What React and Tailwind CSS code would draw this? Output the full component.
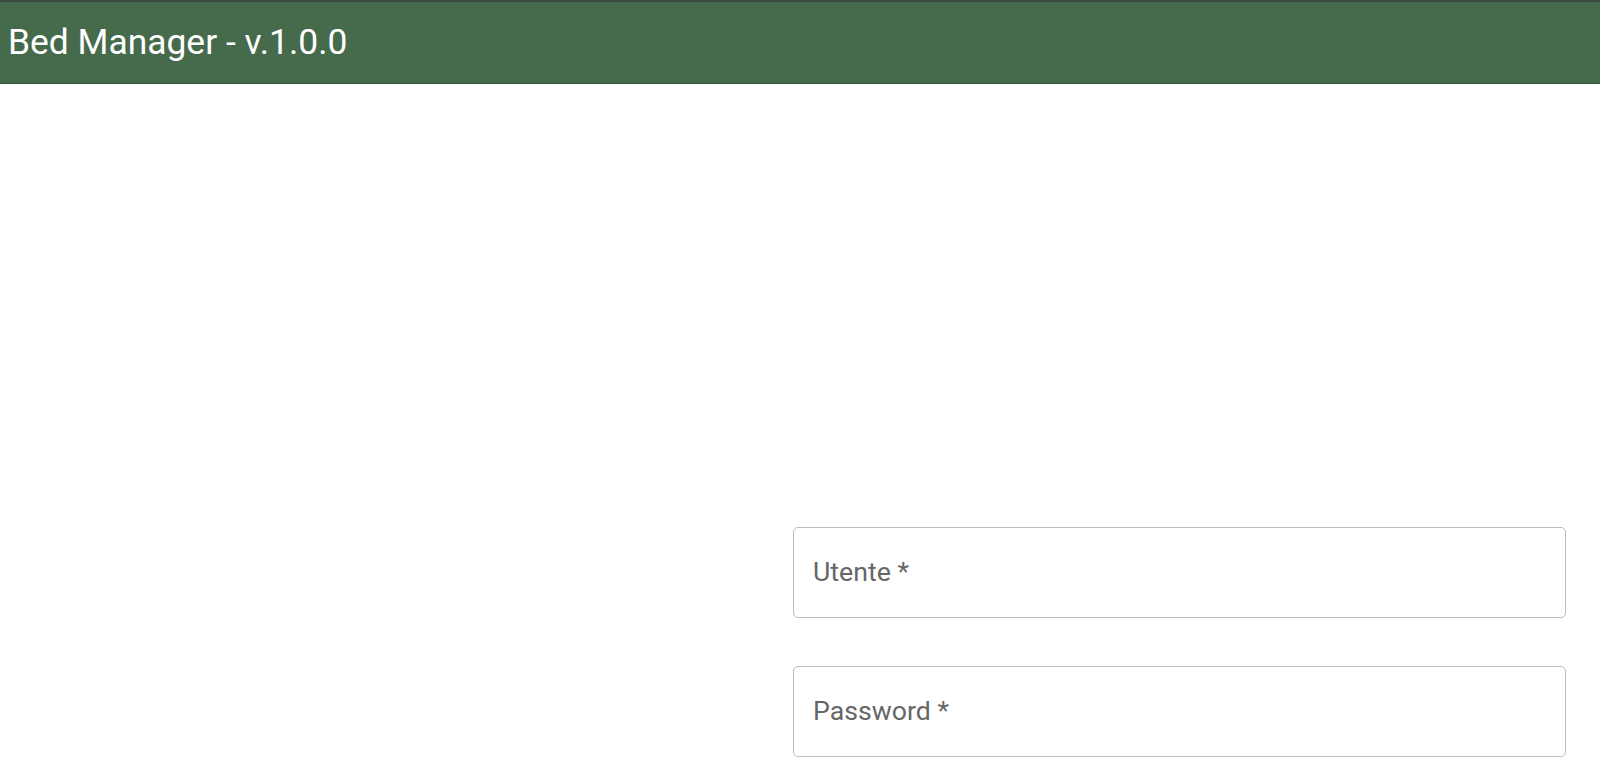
export default function App() {
  return (
    <div className="min-h-[773px] bg-white" style={{ fontFamily: "Roboto, 'Liberation Sans', sans-serif" }}>
      <header className="h-[84px] border-t-2 border-b border-t-[#3d4a40] border-b-[#2f5a36] bg-[#466a4c] flex items-center pl-[8px]">
        <h1 className="text-[35.4px] leading-none text-white font-normal">Bed Manager - v.1.0.0</h1>
      </header>
      <div className="flex">
        <div className="flex-1" />
        <div className="w-[773px] mr-[34px] mt-[443px] flex flex-col gap-[48px]">
          <div className="h-[91px] rounded-[5px] border border-[#bdbdbd] flex items-center px-[19px]">
            <span className="text-[26.7px] text-[#666666]">Utente *</span>
          </div>
          <div className="h-[91px] rounded-[5px] border border-[#bdbdbd] flex items-center px-[19px]">
            <span className="text-[26.7px] text-[#666666]">Password *</span>
          </div>
        </div>
      </div>
    </div>
  );
}
